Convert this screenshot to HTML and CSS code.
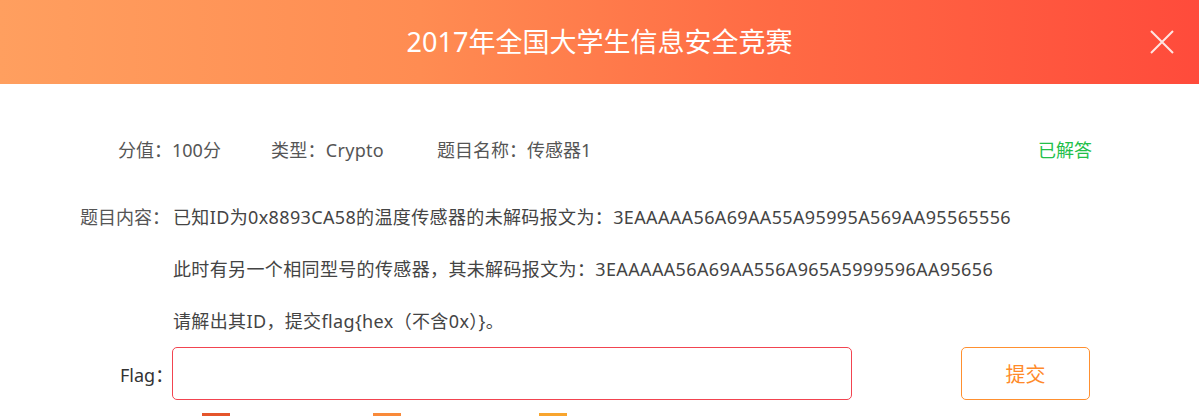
FILE: index.html
```html
<!DOCTYPE html>
<html lang="zh-CN">
<head>
<meta charset="utf-8">
<title>题目</title>
<link rel="stylesheet" href="styles.css">
</head>
<body>
<div class="dialog">
  <header class="head">
    <span class="spacer"></span>
    <h1 class="title">2017年全国大学生信息安全竞赛</h1>
    <button class="close" aria-label="关闭">
      <svg width="24" height="24" viewBox="0 0 24 24"><path d="M1 1L23 23M23 1L1 23" stroke="#fff" stroke-opacity="0.85" stroke-width="2" fill="none"/></svg>
    </button>
  </header>
  <div class="body">
    <div class="meta">
      <span class="meta-item score">分值：100分</span>
      <span class="meta-item type">类型：Crypto</span>
      <span class="meta-item name">题目名称：传感器1</span>
      <span class="solved">已解答</span>
    </div>
    <div class="content">
      <div class="label">题目内容：</div>
      <div class="text">
        <p>已知ID为0x8893CA58的温度传感器的未解码报文为：3EAAAAA56A69AA55A95995A569AA95565556</p>
        <p>此时有另一个相同型号的传感器，其未解码报文为：3EAAAAA56A69AA556A965A5999596AA95656</p>
        <p>请解出其ID，提交flag{hex（不含0x）}。</p>
      </div>
    </div>
    <div class="flag-row">
      <label class="flag-label" for="flag">Flag：</label>
      <input id="flag" class="flag-input" type="text">
      <button class="submit">提交</button>
    </div>
    <div class="hints">
      <span class="hint hint-a"></span>
      <span class="hint hint-b"></span>
      <span class="hint hint-c"></span>
    </div>
  </div>
</div>
</body>
</html>
```
FILE: styles.css
```css
* { box-sizing: border-box; }
html, body { margin: 0; padding: 0; background: #fff; }
body {
  font-family: "Noto Sans", "Noto Sans CJK SC", sans-serif;
  color: #555;
  overflow: hidden;
}
.head {
  height: 84px;
  display: grid;
  grid-template-columns: 1fr auto 1fr;
  align-items: center;
  background: linear-gradient(90deg, #ff9f5f 0%, #ff8c52 35%, #ff6a44 65%, #ff4b3b 100%);
}
.title {
  margin: 0;
  font-family: "Noto Sans", "Noto Sans CJK SC", sans-serif;
  font-weight: 400;
  font-size: 27px;
  line-height: 34px;
  color: #fff;
}
.close {
  justify-self: end;
  margin-right: 25px;
  background: none;
  border: 0;
  padding: 0;
  width: 24px;
  height: 24px;
  display: flex;
}
.body { padding-top: 54px; }
.meta {
  display: flex;
  align-items: center;
  padding-left: 118px;
  padding-right: 107px;
  font-size: 18px;
  line-height: 24px;
}
.meta-item { color: #555; }
.score { margin-right: 50px; }
.type { margin-right: 53px; letter-spacing: 0.3px; }
.solved { margin-left: auto; color: #22c04a; }
.content {
  display: flex;
  padding-left: 80px;
  margin-top: 29px;
  font-size: 18px;
  color: #444;
}
.label {
  width: 90px;
  line-height: 52px;
  color: #555;
}
.text { margin-left: 3px; letter-spacing: 0.36px; }
.text p { margin: 0; line-height: 52px; }
.flag-row {
  display: flex;
  align-items: center;
  padding-left: 120px;
}
.flag-label {
  width: 52px;
  font-size: 18px;
  color: #333;
}
.flag-input {
  width: 680px;
  height: 53px;
  border: 1px solid #f24450;
  border-radius: 5px;
  outline: none;
  background: #fff;
}
.submit {
  margin-left: 109px;
  width: 129px;
  height: 53px;
  border: 1px solid #ff9030;
  border-radius: 5px;
  background: #fff;
  color: #ff8a2a;
  font-family: "Noto Sans CJK SC", sans-serif;
  font-size: 20px;
}
.hints {
  display: flex;
  margin-top: 13px;
  padding-left: 202px;
}
.hint { width: 28px; height: 20px; }
.hint-a { background: #e5552b; }
.hint-b { background: #f98a3a; margin-left: 143px; }
.hint-c { background: #f8a52e; margin-left: 138px; }
```
